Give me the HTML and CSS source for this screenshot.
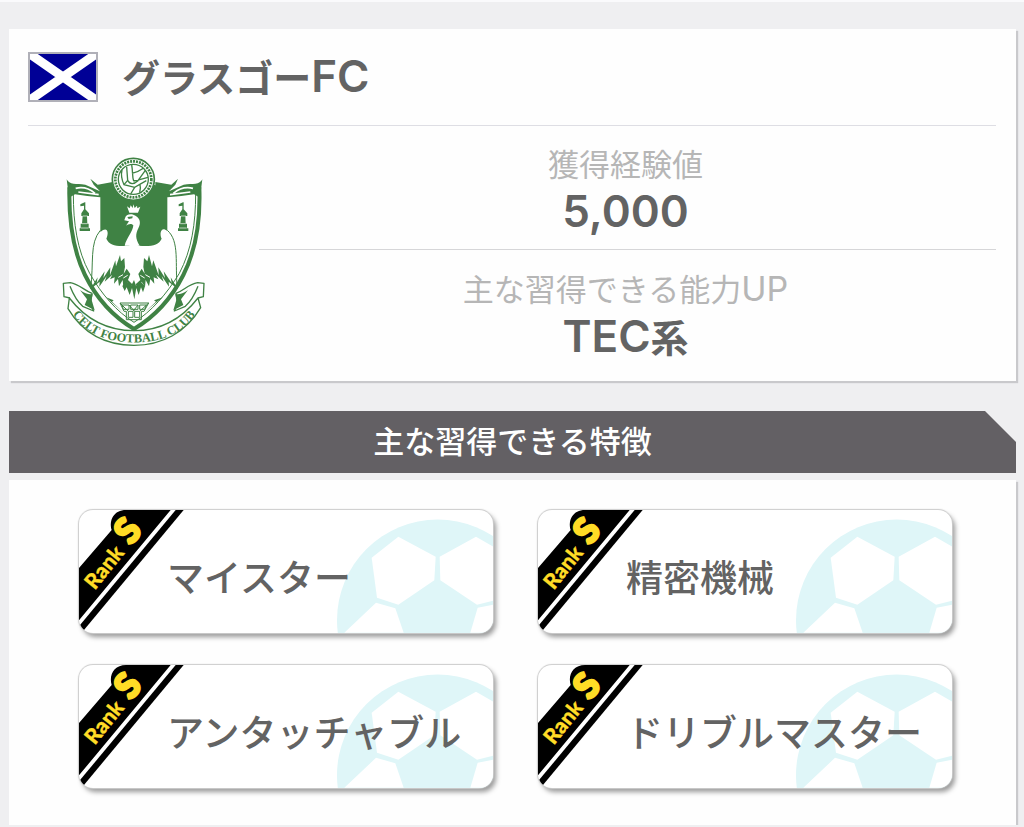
FILE: index.html
```
<!DOCTYPE html>
<html lang="ja">

<head>
    <meta charset="UTF-8">
    <meta name="viewport" content="width=device-width, initial-scale=1.0">
    <title>グラスゴーFC</title>
    <link rel="stylesheet" href="styles.css">
</head>

<body>
    <!-- shared artwork for the skill cards -->
    <svg class="defs" width="0" height="0" aria-hidden="true">
        <symbol id="ball" viewBox="828 62 468 368">
            <circle cx="1130" cy="392" r="302" fill="#dff6f8"/>
            <g fill="#fff">
                <path d="M932 205 1012 142 1124 202 1120 272 1012 346 948 325z"/>
                <path d="M1136 202 1245 142 1330 190 1330 325 1248 346 1138 272z"/>
                <path d="M850 430 945 340 1003 356 1028 430z"/>
                <path d="M1228 430 1250 355 1310 343 1310 430z"/>
            </g>
        </symbol>
        <symbol id="rank" viewBox="57 62 318 369">
            <path d="M57 236 155 122C146 92 162 62 198 62H332L57 393z"/>
            <path d="M347 62H371L57 440V411z"/>
            <g fill="#ffdc26" stroke="#ffdc26" font-family="Lato, sans-serif" font-weight="900">
                <text transform="translate(104 304) rotate(-51)" font-size="64" stroke-width="1">Rank</text>
                <text transform="translate(213 170) rotate(-51)" font-size="106" stroke-width="8">S</text>
            </g>
        </symbol>
    </svg>

    <main>
        <section class="card">
            <header class="club">
                <svg class="flag" viewBox="0 0 66 46" preserveAspectRatio="none" role="img" aria-label="スコットランド">
                    <path fill="#000096" d="M0 0h66v46H0z"/>
                    <path stroke="#fff" stroke-width="9" d="M-3-2 69 48M69-2-3 48"/>
                </svg>
                <h1>グラスゴー<span class="latin">FC</span></h1>
            </header>
            <div class="info">
                <svg class="crest" viewBox="36 36 426 570" role="img" aria-label="Celt Football Club">
                    <defs>
                        <path id="motto" d="M66 506C108 567 170 592 252 592S396 567 438 506"/>
                    </defs>
                    <!-- shield -->
                    <path fill="#fff" stroke="#3f8244" stroke-width="12" d="M58 127C56 230 68 315 105 390C142 465 198 520 252 552C306 520 362 465 400 390C438 315 452 230 448 127"/>
                    <path fill="none" stroke="#3f8244" stroke-width="3" d="M70 145C70 235 81 315 119 385C154 447 200 500 252 532C304 500 350 447 388 385C425 315 437 235 437 145"/>
                    <g fill="#3f8244">
                        <path d="M50 103C58 120 78 116 106 119L150 139L131 119L121 101L143 119L188 111V154L151 157L112 153L75 148L57 158z"/>
                        <path d="M457 103C449 120 429 116 401 119L357 139L376 119L384 101L364 119L316 111V154L353 157L394 153L432 148L450 158z"/>
                    </g>
                    <path fill="none" stroke="#fff" stroke-width="5" d="M77 130Q108 122 135 145M85 141 146 149M429 130Q398 122 370 145M421 141 360 149"/>
                    <!-- field behind the bird -->
                    <path fill="#3f8244" d="M151 141 188 120H315L352 141V258C334 242 327 264 335 281C326 301 301 306 266 302L252 293 236 302C202 306 178 301 169 281C178 262 172 242 151 261z"/>
                    <!-- bird -->
                    <path fill="#fff" d="M225 220C227 209 239 205 250 209C269 216 275 231 265 250C257 266 255 280 269 302H224C229 280 249 259 250 241C244 234 235 237 228 242L237 229 223 226z"/>
                    <path fill="#3f8244" d="M232 216 248 214 247 220 236 222z"/>
                    <path fill="#fff" d="M231 184 239 190 242 181 248 189 250 178 254 189 261 182 262 190 271 185 264 203H238z"/>
                    <path fill="none" stroke="#3f8244" stroke-width="3" d="M151 256C118 295 132 352 122 431M352 256C390 289 374 358 382 431"/>
                    <g fill="#3f8244">
                        <path d="M121 433 143 397 140 414 164 379 160 399 181 367 180 391 196 346 198 364 210 330 213 349 223 339 225 366 221 386 230 371 241 387 234 405 247 418 242 428 230 410 220 426 218 405 207 424 204 402 192 416 194 397 180 403 187 389 164 410 170 393 148 425 149 410z"/>
                        <path d="M384 433 362 397 365 414 341 379 345 399 325 367 326 391 310 346 306 364 297 330 292 349 282 339 280 366 284 386 275 371 265 387 271 405 257 418 263 428 275 410 285 426 287 405 297 424 301 402 313 416 311 397 325 403 318 389 341 410 335 393 357 425 356 410z"/>
                        <path d="M217 423 224 438 230 427 239 450 246 429 253 463 259 429 266 450 273 427 279 442 285 424 273 411 258 422 252 405 243 423 229 409z"/>
                    </g>
                    <path fill="none" stroke="#fff" stroke-width="3" d="M205 397 219 389M220 399 233 391M300 397 286 389M284 399 271 391"/>
                    <!-- towers -->
                    <g fill="#3f8244">
                        <path id="tower" d="M101 172H104L91 178V184L102 182V193L94 205V213H98L96 236H92V250H89V258H120V250H116V236H112L111 213H117V205L106 193V172z"/>
                        <use href="#tower" x="295"/>
                    </g>
                    <path fill="none" stroke="#fff" stroke-width="2" d="M98 213H113M96 236H112M93 249H115M393 213H408M391 236H407M388 249H410"/>
                    <!-- knot under the bird -->
                    <path fill="#3f8244" d="M168 457 191 466 186 470 222 504 190 476zM339 457 312 466 318 470 282 504 314 476z"/>
                    <path fill="none" stroke="#3f8244" stroke-width="3" d="M210 474H296L282 499H274V524H229V499H222zM216 480H237V493H220zM242 480H264V493H242zM269 480H289L284 493H269zM235 499H249V517H235zM254 499H269V517H254zM210 474 235 499M237 480 254 499M264 480 249 499M296 474 269 499"/>
                    <!-- ball -->
                    <circle cx="250" cy="103" r="63" fill="#fff" stroke="#3f8244" stroke-width="5"/>
                    <circle cx="250" cy="103" r="54" fill="none" stroke="#3f8244" stroke-width="8" stroke-dasharray="6 3"/>
                    <circle cx="250" cy="103" r="45" fill="#fff" stroke="#3f8244" stroke-width="4"/>
                    <path fill="none" stroke="#3f8244" stroke-width="4" d="M245 60C249 79 246 94 251 108M230 66 233 106Q244 125 264 107L286 76M216 75Q211 95 222 119L254 127 289 107M246 85Q267 80 280 70M233 106 222 119M251 108Q271 103 294 97M254 127 242 147M270 119Q273 128 269 143"/>
                    <!-- ribbon -->
                    <g fill="#fff" stroke="#3f8244" stroke-width="4" stroke-linejoin="round">
                        <path d="M60 459 42 455 40 415 61 413C89 418 101 436 126 445L121 476 131 498 98 484C84 472 70 449 60 424"/>
                        <path d="M444 459 460 455 462 415 443 413C414 418 403 436 378 445L383 476 373 498 406 484C420 472 434 449 444 424"/>
                        <path d="M58 459C99 512 163 557 252 557S403 512 444 459L452 488C408 562 337 601 252 601S98 564 54 491z"/>
                    </g>
                    <path fill="#3f8244" d="M90 435C105 446 119 450 128 447L125 465 134 496 104 480 111 463zM414 435C399 446 385 450 376 447L379 465 370 496 400 480 393 463z"/>
                    <text class="motto"><textPath href="#motto" startOffset="50%">CELT FOOTBALL CLUB</textPath></text>
                </svg>
                <dl class="stats">
                    <div class="stat">
                        <dt>獲得経験値</dt>
                        <dd><span class="latin">5,000</span></dd>
                    </div>
                    <div class="stat">
                        <dt>主な習得できる能力<span class="latin">UP</span></dt>
                        <dd><span class="latin">TEC</span>系</dd>
                    </div>
                </dl>
            </div>
        </section>

        <section>
            <h2>主な習得できる特徴</h2>
            <ul class="card skills">
                <li>
                    <svg class="ball" aria-hidden="true"><use href="#ball"/></svg>
                    <svg class="rank" role="img" aria-label="Rank S"><use href="#rank"/></svg>
                    <span>マイスター</span>
                </li>
                <li>
                    <svg class="ball" aria-hidden="true"><use href="#ball"/></svg>
                    <svg class="rank" role="img" aria-label="Rank S"><use href="#rank"/></svg>
                    <span>精密機械</span>
                </li>
                <li>
                    <svg class="ball" aria-hidden="true"><use href="#ball"/></svg>
                    <svg class="rank" role="img" aria-label="Rank S"><use href="#rank"/></svg>
                    <span>アンタッチャブル</span>
                </li>
                <li>
                    <svg class="ball" aria-hidden="true"><use href="#ball"/></svg>
                    <svg class="rank" role="img" aria-label="Rank S"><use href="#rank"/></svg>
                    <span>ドリブルマスター</span>
                </li>
            </ul>
        </section>
    </main>
</body>

</html>
```
FILE: styles.css
```
* {
    box-sizing: border-box;
}

body {
    margin: 0;
    border-top: 2px solid #fafafc;
    background-color: #efeff1;
    color: #636363;
    font-family: Inter, "Noto Sans CJK JP", sans-serif;
}

h1, h2, dl, dd, ul {
    margin: 0;
    padding: 0;
}

main {
    padding: 27px 8px 0 9px;
}

.defs {
    position: absolute;
}

.card {
    background-color: #fefefe;
    box-shadow: 2px 2px 1px #c9c9cc;
}

.card:first-child {
    padding: 0 20px 0 19px;
    margin-bottom: 30px;
}

.club {
    display: flex;
    align-items: center;
    gap: 24px;
    height: 97px;
    border-bottom: 1px solid #dedee4;
}

.flag {
    width: 70px;
    height: 50px;
    border: 2px solid #b0b0b8;
}

h1 {
    font-size: 38px;
    line-height: 50px;
    font-weight: 600;
}

/* Latin letters and digits are set a little larger than the kana */
h1 .latin, dd .latin {
    font-size: 44px;
    font-weight: 600;
}

dt .latin {
    font-size: 34px;
}

.info {
    display: grid;
    grid-template-columns: 231px 1fr;
}

.crest {
    width: 142px;
    height: 190px;
    margin: 31px 0 0 34px;
    overflow: visible;
}

.motto {
    fill: #3f8244;
    font-family: "Liberation Serif", serif;
    font-size: 37px;
    font-weight: bold;
    text-anchor: middle;
}

.stat {
    height: 123px;
    padding: 19px 4px 0 0;
    text-align: center;
}

.stat:last-child {
    height: 132px;
    border-top: 1px solid #d6d6d8;
}

dt {
    color: #b6b6b6;
    font-size: 31px;
    line-height: 40px;
}

dd {
    font-size: 38px;
    line-height: 52px;
    font-weight: 600;
}

h2 {
    margin-bottom: 7px;
    background-color: #636064;
    color: #fff;
    font-size: 31px;
    line-height: 62px;
    font-weight: 500;
    text-align: center;
    clip-path: polygon(0 0, calc(100% - 31px) 0, 100% 31px, 100% 100%, 0 100%);
}

.skills {
    display: grid;
    grid-template-columns: 1fr 1fr;
    gap: 32px 45px;
    padding: 30px 64px 37px 70px;
    list-style: none;
}

.skills li {
    position: relative;
    display: flex;
    align-items: center;
    height: 123px;
    padding: 8px 0 0 88px;
    border-radius: 14px;
    overflow: hidden;
    background-color: #fff;
    box-shadow: 0 0 1px 1px #ccc, 3px 4px 5px #999;
    font-size: 37px;
    font-weight: 500;
}

.skills span {
    position: relative;
    white-space: nowrap;
}

.ball {
    position: absolute;
    right: 0;
    bottom: 0;
    width: 156px;
    height: 123px;
}

.rank {
    position: absolute;
    left: 0;
    top: 0;
    width: 106px;
    height: 123px;
}
```
